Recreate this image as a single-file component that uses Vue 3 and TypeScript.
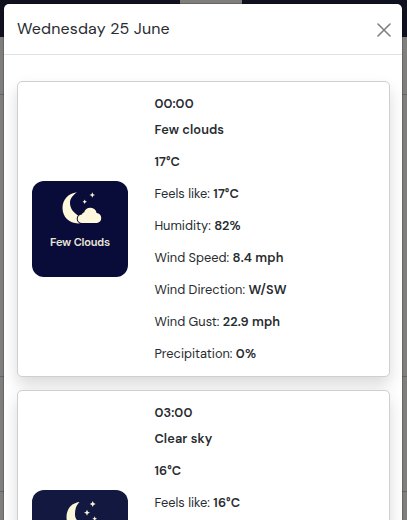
<script setup lang="ts">
interface Reading { label: string; value: string }
interface Forecast { time: string; summary: string; temp: string; icon: 'cloud' | 'clear'; readings: Reading[] }

const forecasts: Forecast[] = [
  {
    time: '00:00', summary: 'Few clouds', temp: '17°C', icon: 'cloud',
    readings: [
      { label: 'Feels like:', value: '17°C' },
      { label: 'Humidity:', value: '82%' },
      { label: 'Wind Speed:', value: '8.4 mph' },
      { label: 'Wind Direction:', value: 'W/SW' },
      { label: 'Wind Gust:', value: '22.9 mph' },
      { label: 'Precipitation:', value: '0%' },
    ],
  },
  {
    time: '03:00', summary: 'Clear sky', temp: '16°C', icon: 'clear',
    readings: [{ label: 'Feels like:', value: '16°C' }],
  },
]
</script>

<template>
  <div class="page">
    <div class="page-top"><span class="page-tab"></span></div>
    <div class="page-line first"></div>
    <div class="page-line second"></div>
    <div class="page-line third"></div>
    <section class="modal" role="dialog">
      <header class="modal-header">
        <h1>Wednesday 25 June</h1>
        <button class="close" aria-label="Close">
          <svg viewBox="0 0 14 14" width="14" height="14"><path d="M1 1 13 13M13 1 1 13" /></svg>
        </button>
      </header>
      <div class="modal-body">
        <article v-for="f in forecasts" :key="f.time" class="card">
          <svg class="picture" viewBox="0 0 96 96" width="96" height="96">
            <template v-if="f.icon === 'cloud'">
              <rect width="96" height="96" rx="12" fill="#090b39" />
              <path fill="#fdf8dc" d="M45 11.300C36 12.300 30.500 19 30.500 27C30.500 36 37.500 43 47.500 42.400L47.500 35C41.500 32.500 38 27 38 22C38 17.500 41 14 45 11.300Z" />
              <path class="cloud" d="M50.200 42A4.200 4.200 0 0 1 49.800 33.400A4 4 0 0 1 52.200 31.300A6.400 6.400 0 0 1 64.600 31.900A5.100 5.100 0 0 1 65 42Z" />
              <path fill="#fdf8dc" d="M60.300 11.200 61.100 13.200 63.100 14 61.100 14.800 60.300 16.800 59.500 14.800 57.500 14 59.500 13.200ZM52.700 18.500 53.400 20 54.900 20.700 53.400 21.400 52.700 22.900 52 21.400 50.500 20.700 52 20Z" />
              <text x="48" y="65" text-anchor="middle" textLength="60">Few Clouds</text>
            </template>
            <template v-else>
              <rect width="96" height="96" rx="12" fill="#12183f" />
              <path fill="#f9f6da" d="M47.500 12C39.500 13 34.500 19 34.500 27C34.500 36 41 43 50 43C56 43 61 39 63 34C54 37 43.500 33 43 25C42.800 19 44.500 15 47.500 12Z" />
              <path fill="#f9f6da" d="M60.700 11 61.600 13.100 63.700 14 61.600 14.900 60.700 17 59.800 14.900 57.700 14 59.800 13.100ZM55 19.700 55.900 21.800 58 22.700 55.900 23.600 55 25.700 54.100 23.600 52 22.700 54.100 21.800ZM62.700 26.300 63.400 28 65.100 28.700 63.400 29.400 62.700 31.100 62 29.400 60.300 28.700 62 28Z" />
            </template>
          </svg>
          <div class="details">
            <p class="time"><b>{{ f.time }}</b></p>
            <p><b>{{ f.summary }}</b></p>
            <p><b>{{ f.temp }}</b></p>
            <p v-for="r in f.readings" :key="r.label">{{ r.label }} <b>{{ r.value }}</b></p>
          </div>
        </article>
      </div>
    </section>
  </div>
</template>

<style>
body { overflow: hidden; }
</style>

<style scoped>
.page { position: relative; box-sizing: border-box; height: 520px; padding: 4px 5px 0 4px; overflow: hidden; background: #7f7e7d; font-family: "DM Sans", Inter, sans-serif; color: #282c30; }
.page-top { position: absolute; inset: 0 0 auto; height: 37px; background: #10111f; }
.page-tab { position: absolute; left: 180px; width: 62px; height: 4px; background: #7f7e7d; }
.page-line { position: absolute; left: 0; right: 0; height: 1px; background: #666; }
.first { top: 94px; }
.second { top: 376px; }
.third { top: 491px; }
.modal { position: relative; box-sizing: border-box; height: 600px; background: #fff; border-radius: 5px 5px 0 0; box-shadow: 0 0 0 1px #00000030; overflow: hidden; }
.modal-header { box-sizing: border-box; height: 51px; display: flex; align-items: center; justify-content: space-between; padding: 0 11.5px 0 13px; border-bottom: 1px solid #dee2e6; }
h1 { margin: 0; font-size: 16px; line-height: 24px; font-weight: 400; letter-spacing: .14px; }
.close { display: flex; padding: 1px 0 0; border: 0; background: none; }
.close path { fill: none; stroke: #808080; stroke-width: 1.6; stroke-linecap: round; }
.modal-body { display: flex; flex-direction: column; gap: 13px; padding: 26px 12px 0 13px; }
.card { box-sizing: border-box; height: 296px; display: flex; padding: 0 14px; border: 1px solid #cfcfcf; border-radius: 5px; background: #fff; box-shadow: 0 8px 16px rgba(0, 0, 0, .15); }
.picture { align-self: center; flex: none; }
.picture text { font: 600 11px Inter, sans-serif; fill: #e6e3d6; }
.cloud { fill: #fdf8dc; stroke: #090b39; stroke-width: 2; paint-order: stroke; }
.details { margin-left: 26.4px; padding-top: 14px; font-size: 12.8px; }
p { margin: 0 0 16px; line-height: 16px; white-space: nowrap; }
.time { margin-bottom: 10px; }
b { font-weight: 650; letter-spacing: .1px; }
</style>
